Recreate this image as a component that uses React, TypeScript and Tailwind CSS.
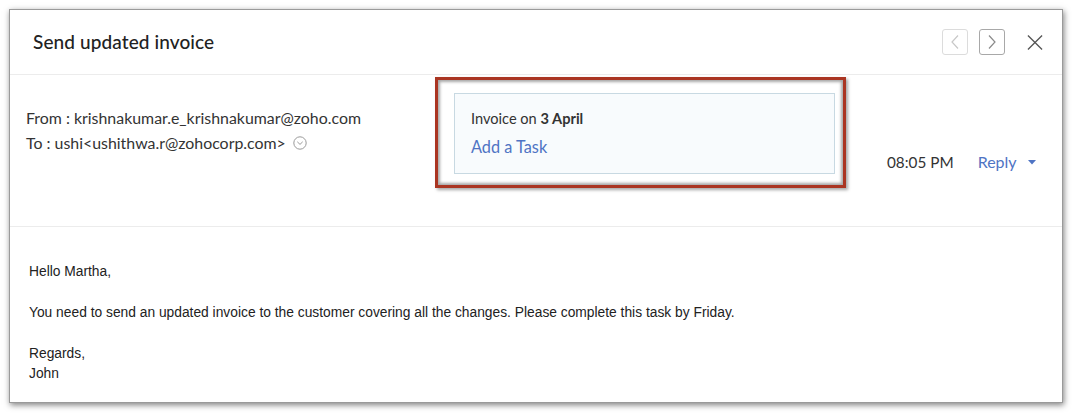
import React from "react";

export default function App() {
  const head = { fontFamily: "Lato, 'Open Sans', sans-serif" };
  const body = { fontFamily: "'Liberation Sans', Arial, sans-serif" };
  return (
    <div className="w-[1072px] h-[413px] bg-white pt-[9px] pl-[9px]">
      <div className="w-[1054px] h-[394px] bg-white border border-[#9a9a9a] shadow-[1px_2px_6px_rgba(0,0,0,0.5)] flex flex-col">
        {/* Header */}
        <div className="h-[65px] flex items-center border-b border-[#ececec] pl-[23px] pr-[19px]" style={head}>
          <div className="text-[19px] font-medium text-[#222] tracking-[0.1px]">Send updated invoice</div>
          <div className="ml-auto flex items-center">
            <div className="w-[26px] h-[26px] rounded-[3px] border border-[#dcdcdc] flex items-center justify-center">
              <svg width="10" height="16" viewBox="0 0 10 16" fill="none">
                <path d="M8 1.5L2 8l6 6.5" stroke="#c8c8c8" strokeWidth="1.2" />
              </svg>
            </div>
            <div className="w-[26px] h-[26px] rounded-[3px] border border-[#a8a8a8] flex items-center justify-center ml-[11px]">
              <svg width="10" height="16" viewBox="0 0 10 16" fill="none">
                <path d="M2 1.5L8 8l-6 6.5" stroke="#8a8a8a" strokeWidth="1.2" />
              </svg>
            </div>
            <div className="ml-[22px] w-[16px] h-[16px] flex items-center justify-center">
              <svg width="17" height="17" viewBox="0 0 17 17" fill="none">
                <path d="M1 1l15 15M16 1L1 16" stroke="#555" strokeWidth="1.4" />
              </svg>
            </div>
          </div>
        </div>

        {/* Meta row */}
        <div className="h-[152px] flex items-start border-b border-[#ececec]" style={head}>
          <div className="w-[425px] pl-[16px] pt-[30px] text-[15.9px] leading-[25px] text-[#333]">
            <div>From : krishnakumar.e_krishnakumar@zoho.com</div>
            <div className="flex items-center">
              <span>To : ushi&lt;ushithwa.r@zohocorp.com&gt;</span>
              <svg className="ml-[7px] mt-[1px]" width="14" height="14" viewBox="0 0 14 14" fill="none">
                <circle cx="7" cy="7" r="6.2" stroke="#9a9a9a" strokeWidth="1" />
                <path d="M4.3 5.8L7 8.4l2.7-2.6" stroke="#9a9a9a" strokeWidth="1" />
              </svg>
            </div>
          </div>
          <div className="mt-[2px] w-[411px] h-[111px] border-[3px] border-[#aa3522] shadow-[inset_0_0_3px_2px_rgba(0,0,0,0.35),2px_2px_3px_rgba(0,0,0,0.35)] pl-[16px] pt-[13px]">
            <div className="w-[381px] h-[81px] bg-[#f8fbfd] border border-[#c8d9e2] pl-[16px] pt-[15px]">
              <div className="text-[14.6px] leading-[20px] text-[#333]">
                Invoice on <span className="font-bold">3 April</span>
              </div>
              <div className="mt-[8px] text-[16.3px] leading-[20px] text-[#4f74c4]">Add a Task</div>
            </div>
          </div>
          <div className="ml-[41px] mt-[75px] flex items-center">
            <span className="text-[15.3px] leading-[24px] text-[#333]">08:05 PM</span>
            <span className="ml-[24px] text-[16px] leading-[24px] text-[#4f74c4]">Reply</span>
            <svg className="ml-[11px]" width="8" height="5" viewBox="0 0 8 5">
              <path d="M0 0h8L4 4.5z" fill="#4f74c4" />
            </svg>
          </div>
        </div>

        {/* Body */}
        <div className="pl-[19px] pt-[35px] text-[13.8px] leading-[20px] text-[#222]" style={body}>
          <div>Hello Martha,</div>
          <div className="mt-[21px]">
            You need to send an updated invoice to the customer covering all the changes. Please complete this task by Friday.
          </div>
          <div className="mt-[21px]">Regards,</div>
          <div>John</div>
        </div>
      </div>
    </div>
  );
}
